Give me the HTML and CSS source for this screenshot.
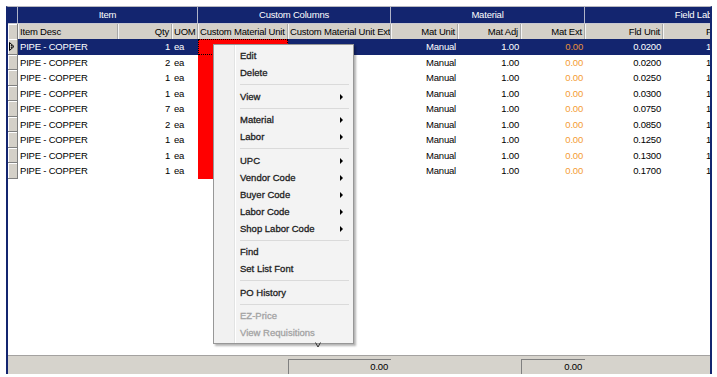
FILE: index.html
```html
<!DOCTYPE html>
<html lang="en">
<head>
    <meta charset="UTF-8">
    <title>Estimate Items</title>
    <link rel="stylesheet" href="styles.css">
</head>
<body>
    <div class="grid">
        <div class="groups">
            <div class="corner"></div>
            <div class="group">Item</div>
            <div class="group">Custom Columns</div>
            <div class="group">Material</div>
            <div class="group">Field Labor</div>
        </div>

        <div class="row heads">
            <div class="selector"></div>
            <div class="head">Item Desc</div>
            <div class="head num">Qty</div>
            <div class="head">UOM</div>
            <div class="head">Custom Material Unit</div>
            <div class="head">Custom Material Unit Ext</div>
            <div class="head num">Mat Unit</div>
            <div class="head num">Mat Adj</div>
            <div class="head num">Mat Ext</div>
            <div class="head num">Fld Unit</div>
            <div class="head clip">Fld Adj</div>
        </div>

        <div class="body">
            <div class="row selected">
                <div class="selector">
                    <svg width="6" height="9" viewBox="0 0 6 9"><path d="M0.5 0.5 L5 4.5 L0.5 8.5 Z M2 3 L3 4.5 L2 6" fill="none" stroke="#000" stroke-width="1"/></svg>
                </div>
                <div class="cell">PIPE - COPPER</div>
                <div class="cell num">1</div>
                <div class="cell">ea</div>
                <div class="cell custom focus"></div>
                <div class="cell"></div>
                <div class="cell num">Manual</div>
                <div class="cell num">1.00</div>
                <div class="cell num ext">0.00</div>
                <div class="cell num">0.0200</div>
                <div class="cell clip">1.00</div>
            </div>
            <div class="row">
                <div class="selector"></div>
                <div class="cell">PIPE - COPPER</div>
                <div class="cell num">2</div>
                <div class="cell">ea</div>
                <div class="cell custom"></div>
                <div class="cell"></div>
                <div class="cell num">Manual</div>
                <div class="cell num">1.00</div>
                <div class="cell num ext">0.00</div>
                <div class="cell num">0.0200</div>
                <div class="cell clip">1.00</div>
            </div>
            <div class="row">
                <div class="selector"></div>
                <div class="cell">PIPE - COPPER</div>
                <div class="cell num">1</div>
                <div class="cell">ea</div>
                <div class="cell custom"></div>
                <div class="cell"></div>
                <div class="cell num">Manual</div>
                <div class="cell num">1.00</div>
                <div class="cell num ext">0.00</div>
                <div class="cell num">0.0250</div>
                <div class="cell clip">1.00</div>
            </div>
            <div class="row">
                <div class="selector"></div>
                <div class="cell">PIPE - COPPER</div>
                <div class="cell num">1</div>
                <div class="cell">ea</div>
                <div class="cell custom"></div>
                <div class="cell"></div>
                <div class="cell num">Manual</div>
                <div class="cell num">1.00</div>
                <div class="cell num ext">0.00</div>
                <div class="cell num">0.0300</div>
                <div class="cell clip">1.00</div>
            </div>
            <div class="row">
                <div class="selector"></div>
                <div class="cell">PIPE - COPPER</div>
                <div class="cell num">7</div>
                <div class="cell">ea</div>
                <div class="cell custom"></div>
                <div class="cell"></div>
                <div class="cell num">Manual</div>
                <div class="cell num">1.00</div>
                <div class="cell num ext">0.00</div>
                <div class="cell num">0.0750</div>
                <div class="cell clip">1.00</div>
            </div>
            <div class="row">
                <div class="selector"></div>
                <div class="cell">PIPE - COPPER</div>
                <div class="cell num">2</div>
                <div class="cell">ea</div>
                <div class="cell custom"></div>
                <div class="cell"></div>
                <div class="cell num">Manual</div>
                <div class="cell num">1.00</div>
                <div class="cell num ext">0.00</div>
                <div class="cell num">0.0850</div>
                <div class="cell clip">1.00</div>
            </div>
            <div class="row">
                <div class="selector"></div>
                <div class="cell">PIPE - COPPER</div>
                <div class="cell num">1</div>
                <div class="cell">ea</div>
                <div class="cell custom"></div>
                <div class="cell"></div>
                <div class="cell num">Manual</div>
                <div class="cell num">1.00</div>
                <div class="cell num ext">0.00</div>
                <div class="cell num">0.1250</div>
                <div class="cell clip">1.00</div>
            </div>
            <div class="row">
                <div class="selector"></div>
                <div class="cell">PIPE - COPPER</div>
                <div class="cell num">1</div>
                <div class="cell">ea</div>
                <div class="cell custom"></div>
                <div class="cell"></div>
                <div class="cell num">Manual</div>
                <div class="cell num">1.00</div>
                <div class="cell num ext">0.00</div>
                <div class="cell num">0.1300</div>
                <div class="cell clip">1.00</div>
            </div>
            <div class="row">
                <div class="selector"></div>
                <div class="cell">PIPE - COPPER</div>
                <div class="cell num">1</div>
                <div class="cell">ea</div>
                <div class="cell custom"></div>
                <div class="cell"></div>
                <div class="cell num">Manual</div>
                <div class="cell num">1.00</div>
                <div class="cell num ext">0.00</div>
                <div class="cell num">0.1700</div>
                <div class="cell clip">1.00</div>
            </div>
        </div>

        <!-- Totals bar -->
        <div class="row totals">
            <div></div><div></div><div></div><div></div><div></div>
            <div class="total">0.00</div>
            <div></div><div></div>
            <div class="total">0.00</div>
            <div></div><div></div>
        </div>
    </div>

    <!-- Right-click menu -->
    <div class="menu">
        <div class="item">Edit</div>
        <div class="item">Delete</div>
        <div class="sep"></div>
        <div class="item sub">View</div>
        <div class="sep"></div>
        <div class="item sub">Material</div>
        <div class="item sub">Labor</div>
        <div class="sep"></div>
        <div class="item sub">UPC</div>
        <div class="item sub">Vendor Code</div>
        <div class="item sub">Buyer Code</div>
        <div class="item sub">Labor Code</div>
        <div class="item sub">Shop Labor Code</div>
        <div class="sep"></div>
        <div class="item">Find</div>
        <div class="item">Set List Font</div>
        <div class="sep"></div>
        <div class="item">PO History</div>
        <div class="sep"></div>
        <div class="item disabled">EZ-Price</div>
        <div class="item disabled">View Requisitions</div>
    </div>
    <svg class="pointer" width="6" height="6" viewBox="0 0 6 6"><path d="M0.5 0.5 L3 5 L5.5 0.5" fill="none" stroke="#333" stroke-width="1"/></svg>
</body>
</html>
```

FILE: styles.css
```css
:root {
    --navy: #13256f;
    --face: #d4d0c8;
    --shadow: #808080;
    --orange: #f49c34;
    --cols: 10px 100px 54px 26px 90px 103px 67px 63px 64px 78px 120px;
}

* {
    margin: 0;
    padding: 0;
    box-sizing: border-box;
}

body {
    background: #fff;
    font-family: "Liberation Sans", Arial, sans-serif;
    font-size: 9.5px;
    letter-spacing: -0.2px;
    color: #000;
    overflow: hidden;
    width: 717px;
    height: 377px;
}

.grid {
    margin: 6px 0 0 6px;
    width: 706px;
    height: 368px;
    border-left: 2px solid var(--navy);
    border-right: 2px solid var(--navy);
    border-top: 1px solid #b8b8c0;
    display: flex;
    flex-direction: column;
    overflow: hidden;
}

.groups {
    display: grid;
    grid-template-columns: 10px 180px 193px 194px 226px;
    height: 16px;
    background: var(--navy);
    color: #fff;
}

.group, .corner {
    border-right: 1px solid #b0b4c8;
    line-height: 16px;
    text-align: center;
    white-space: nowrap;
}

.row {
    display: grid;
    grid-template-columns: var(--cols);
    white-space: nowrap;
}

.heads {
    height: 16px;
    background: var(--face);
    border-top: 1px solid #c8c8d0;
}

.head {
    line-height: 15px;
    padding: 0 2px;
    border-right: 1px solid #a8a8a8;
    box-shadow: inset 1px 0 #f4f4f4;
    overflow: hidden;
}

.head.clip {
    padding-left: 43px;
    border-right: none;
}

.num {
    text-align: right;
}

.body {
    flex: 1;
    background: #fff;
}

.body .row {
    height: 15.5px;
}

.selector {
    background: var(--face);
    border-right: 1px solid var(--shadow);
    border-bottom: 1px solid var(--shadow);
    box-shadow: inset 1px 1px #fff;
    display: flex;
    align-items: center;
    padding-left: 1px;
}

.heads .selector {
    border-bottom: none;
}

.cell {
    line-height: 15.5px;
    padding: 0 2px;
    overflow: hidden;
}

.cell.clip {
    padding-left: 43px;
}

.cell.custom {
    background: #f00;
}

.cell.focus {
    outline: 1px dotted #000;
    outline-offset: -1px;
}

.cell.ext {
    color: var(--orange);
}

.selected .cell {
    background: var(--navy);
    color: #fff;
}

.selected .cell.custom {
    background: #f00;
}

.selected .cell.ext {
    color: #e8903a;
}

.totals {
    height: 19px;
    background: #d6d3cc;
    border-top: 1px solid #a4a2a0;
}

.total {
    margin-top: 3px;
    border-top: 1px solid var(--shadow);
    border-left: 1px solid var(--shadow);
    text-align: right;
    padding-right: 3px;
    line-height: 14px;
}

/* context menu */
.menu {
    position: absolute;
    left: 213px;
    top: 44px;
    width: 141px;
    padding: 2px;
    border: 1px solid #979797;
    background: linear-gradient(to right, #f1f1f1 20px, #e2e3e3 20px, #e2e3e3 21px, #fff 21px, #fff 22px, #f3f3f3 22px);
    box-shadow: 2px 2px 2px rgba(0, 0, 0, 0.3);
    color: #1e1e1e;
    letter-spacing: 0;
}

.item {
    height: 17px;
    line-height: 17px;
    padding-left: 24px;
    position: relative;
    -webkit-text-stroke: 0.3px #1e1e1e;
}

.item.sub::after {
    content: "";
    position: absolute;
    right: 8px;
    top: 6px;
    border-left: 3px solid #000;
    border-top: 3px solid transparent;
    border-bottom: 3px solid transparent;
}

.item.disabled {
    color: #a3a3a3;
    -webkit-text-stroke: 0.3px #a3a3a3;
}

.sep {
    height: 1px;
    margin: 3px 2px 2.5px 24px;
    background: #dadada;
}

.pointer {
    position: absolute;
    left: 315px;
    top: 342px;
}
```
